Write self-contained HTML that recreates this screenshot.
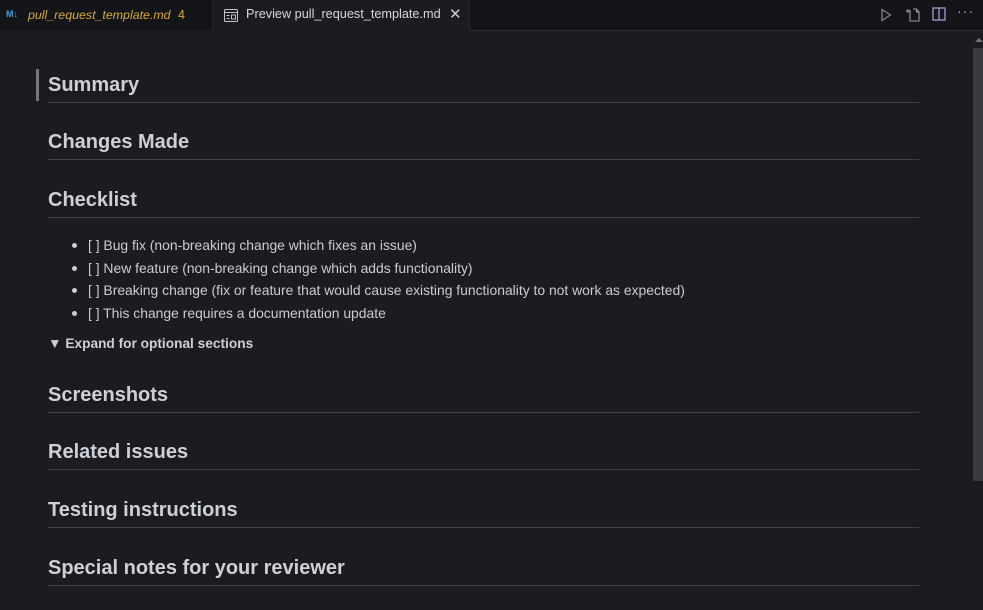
<!DOCTYPE html>
<html><head><meta charset="utf-8"><style>
*{margin:0;padding:0;box-sizing:border-box}
body{width:983px;height:610px;background:#1b1c21;overflow:hidden;font-family:"Liberation Sans",sans-serif;position:relative;color:#cccccc}
.tabs{position:absolute;left:0;top:0;width:983px;height:31px;background:#141519;border-bottom:1px solid #2a2b30}
.tab1{position:absolute;left:0;top:0;width:213px;height:31px;background:#141519;border-right:1px solid #25262b}
.tab2{position:absolute;left:213px;top:0;width:257px;height:31px;background:#1b1c21;border-right:1px solid #25262b}
.t{position:absolute;top:7px}
.h{position:absolute;left:48px;width:871px;font-size:20px;font-weight:bold;color:#cdd0d6;border-bottom:1px solid #3e3f45;height:30px;line-height:24px}
ul{position:absolute;left:60px;top:234px;list-style:none;font-size:13.9px;color:#cccccc}
li{height:22.5px;line-height:22px;position:relative;padding-left:28px}
li:before{content:"";position:absolute;left:12px;top:9px;width:5px;height:5px;border-radius:50%;background:#ccc}
</style></head><body>
<div class="tabs">
<div class="tab1">
<span style="position:absolute;left:6px;top:9px;font-size:9px;font-weight:bold;color:#4b9ee6">M↓</span>
<span class="t" style="left:28px;color:#d7a83a;font-style:italic;font-size:12.4px;top:8px">pull_request_template.md</span>
<span class="t" style="left:178px;color:#d7a83a;font-size:12.5px;top:8px">4</span>
</div>
<div class="tab2">
<svg style="position:absolute;left:11px;top:9px" width="14" height="13" viewBox="0 0 14 13" fill="none" stroke="#c5c5c5" stroke-width="1"><rect x="0.5" y="0.5" width="13" height="12" rx="1"/><line x1="0.5" y1="3.5" x2="13.5" y2="3.5"/><rect x="7.5" y="6" width="4" height="4"/><line x1="2.5" y1="6.5" x2="5.5" y2="6.5"/><line x1="2.5" y1="9.5" x2="5.5" y2="9.5"/></svg>
<span class="t" style="left:33px;color:#d8d8d8;font-size:12.7px;top:7px">Preview pull_request_template.md</span>
<span style="position:absolute;left:236px;top:5px;font-size:15px;color:#ccc">✕</span>
</div>
<svg style="position:absolute;left:880px;top:8px" width="12" height="14" viewBox="0 0 12 14" fill="none" stroke="#8a8a8a" stroke-width="1.2"><path d="M2 1.5 L10.5 7 L2 12.5Z"/></svg>
<svg style="position:absolute;left:905px;top:7px" width="16" height="15" viewBox="0 0 16 15" fill="none" stroke="#9a9a9a" stroke-width="1.1"><path d="M5 3 V14 H14 V5 L11.5 2 H8"/><path d="M11.5 2 V5 H14"/><path d="M1 4 H5 M3 2 V6"/></svg>
<svg style="position:absolute;left:932px;top:7px" width="14" height="15" viewBox="0 0 14 15" fill="none" stroke="#b9a2d8" stroke-width="1.2"><rect x="1" y="1" width="12" height="12"/><line x1="7" y1="1" x2="7" y2="13"/></svg>
<span style="position:absolute;left:957px;top:3px;font-size:14px;color:#aaa;letter-spacing:1px">···</span>
</div>
<div style="position:absolute;left:975px;top:38px;width:0;height:0;border-left:4px solid transparent;border-right:4px solid transparent;border-bottom:4px solid #777"></div>
<div style="position:absolute;left:973px;top:48px;width:10px;height:433px;background:#3a3b40"></div>
<div style="position:absolute;left:36px;top:69px;width:3px;height:32px;background:#777"></div>
<div class="h" style="top:73px">Summary</div>
<div class="h" style="top:130px">Changes Made</div>
<div class="h" style="top:188px">Checklist</div>
<ul>
<li>[ ] Bug fix (non-breaking change which fixes an issue)</li>
<li>[ ] New feature (non-breaking change which adds functionality)</li>
<li>[ ] Breaking change (fix or feature that would cause existing functionality to not work as expected)</li>
<li>[ ] This change requires a documentation update</li>
</ul>
<div style="position:absolute;left:48px;top:336px;font-size:13.7px;font-weight:bold;color:#d0d0d0">▼ Expand for optional sections</div>
<div class="h" style="top:383px">Screenshots</div>
<div class="h" style="top:440px">Related issues</div>
<div class="h" style="top:498px">Testing instructions</div>
<div class="h" style="top:556px">Special notes for your reviewer</div>
</body></html>
